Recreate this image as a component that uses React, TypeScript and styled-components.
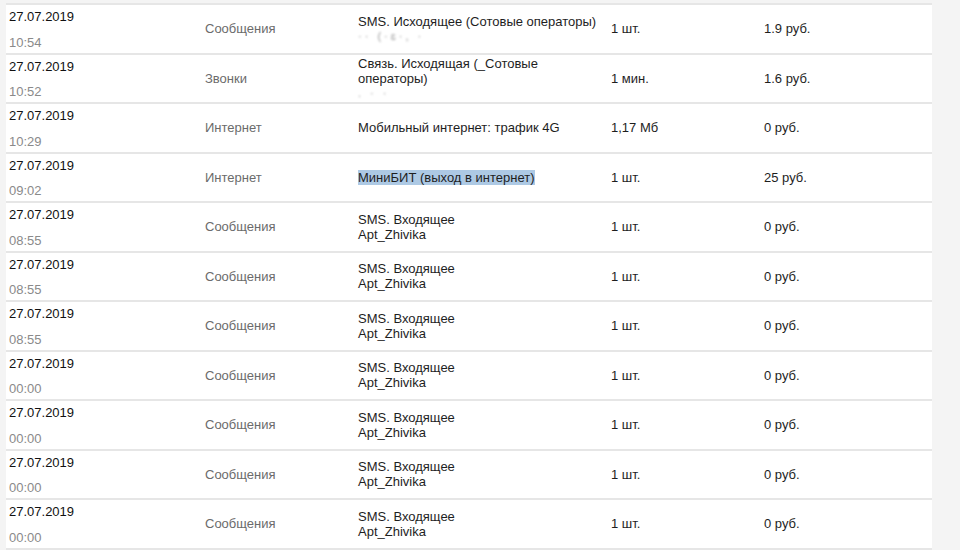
import React from 'react'
import styled, { createGlobalStyle } from 'styled-components'

const GlobalStyle = createGlobalStyle`
  html, body {
    margin: 0;
    padding: 0;
    background: #f4f4f4;
    overflow: hidden;
  }
  body {
    font-family: Arial, "Liberation Sans", Helvetica, sans-serif;
    font-size: 13px;
  }
`

const Page = styled.div`
  width: 960px;
  height: 550px;
  padding: 3px 28px 0 6px;
  box-sizing: border-box;
`

const Table = styled.div`
  background: #ffffff;
  border-top: 2px solid #e6e6e6;
`

const Row = styled.div`
  display: grid;
  grid-template-columns: 196px 153px 253px 153px 1fr;
  height: 49.5px;
  box-sizing: border-box;
  border-bottom: 2px solid #e6e6e6;
`

const DateCell = styled.div`
  display: flex;
  flex-direction: column;
  justify-content: space-between;
  padding: 4px 3px 3px;
  line-height: 15px;
`

const Day = styled.div`
  color: #111111;
`

const Time = styled.div`
  color: #8a8a8a;
`

const Cell = styled.div<{ muted?: boolean }>`
  display: flex;
  flex-direction: column;
  justify-content: center;
  padding-left: 3px;
  line-height: 15px;
  color: ${p => (p.muted ? '#6b6b6b' : '#1e1e1e')};
  white-space: nowrap;
`

const Highlight = styled.span`
  background: #adc9e4;
  align-self: flex-start;
`

const Blur = styled.div`
  color: #9a9a9a;
  filter: blur(0.8px);
  font-size: 11px;
  line-height: 15px;
  letter-spacing: 3px;
`

type Item = {
  time: string
  kind: string
  lines: string[]
  blur?: string
  highlight?: boolean
  qty: string
  price: string
}

const sms = (time: string): Item => ({
  time,
  kind: 'Сообщения',
  lines: ['SMS. Входящее', 'Apt_Zhivika'],
  qty: '1 шт.',
  price: '0 руб.',
})

const items: Item[] = [
  {
    time: '10:54',
    kind: 'Сообщения',
    lines: ['SMS. Исходящее (Сотовые операторы)'],
    blur: '·· (·ɛ·,          ·',
    qty: '1 шт.',
    price: '1.9 руб.',
  },
  {
    time: '10:52',
    kind: 'Звонки',
    lines: ['Связь. Исходящая (_Сотовые', 'операторы)'],
    blur: '.   ·   ·',
    qty: '1 мин.',
    price: '1.6 руб.',
  },
  {
    time: '10:29',
    kind: 'Интернет',
    lines: ['Мобильный интернет: трафик 4G'],
    qty: '1,17 Мб',
    price: '0 руб.',
  },
  {
    time: '09:02',
    kind: 'Интернет',
    lines: ['МиниБИТ (выход в интернет)'],
    highlight: true,
    qty: '1 шт.',
    price: '25 руб.',
  },
  sms('08:55'),
  sms('08:55'),
  sms('08:55'),
  sms('00:00'),
  sms('00:00'),
  sms('00:00'),
  sms('00:00'),
]

const App: React.FC = () => {
  return (
    <Page>
      <GlobalStyle />
      <Table>
        {items.map((item, i) => (
          <Row key={i}>
            <DateCell>
              <Day>27.07.2019</Day>
              <Time>{item.time}</Time>
            </DateCell>
            <Cell muted>{item.kind}</Cell>
            <Cell>
              {item.lines.map(line =>
                item.highlight ? (
                  <Highlight key={line}>{line}</Highlight>
                ) : (
                  <div key={line}>{line}</div>
                )
              )}
              {item.blur && <Blur>{item.blur}</Blur>}
            </Cell>
            <Cell>{item.qty}</Cell>
            <Cell>{item.price}</Cell>
          </Row>
        ))}
      </Table>
    </Page>
  )
}

export default App
